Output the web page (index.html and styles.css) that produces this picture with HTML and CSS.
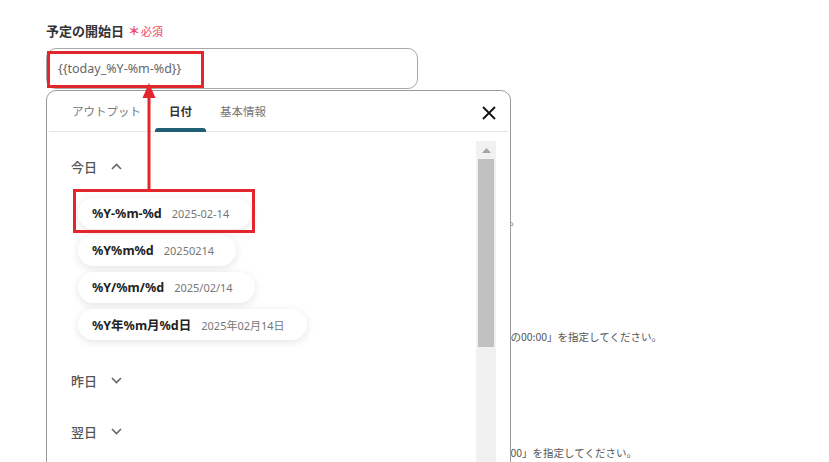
FILE: index.html
```html
<!DOCTYPE html>
<html lang="ja">
<head>
<meta charset="utf-8">
<title>予定の開始日</title>
<link rel="stylesheet" href="styles.css">
</head>
<body>
<div class="page">
  <div class="field">
    <div class="label">予定の開始日<span class="req"><span class="ast">＊</span>必須</span></div>
    <div class="input-wrap">
      <div class="input">{{today_%Y-%m-%d}}</div>
      <div class="panel">
        <div class="tabs">
          <div class="tab">アウトプット</div>
          <div class="tab active">日付</div>
          <div class="tab">基本情報</div>
          <div class="close">
            <svg width="14" height="14" viewBox="0 0 14 14"><path d="M1 1 L13 13 M13 1 L1 13" stroke="#111" stroke-width="1.8" fill="none"/></svg>
          </div>
        </div>
        <div class="panel-body">
          <div class="content">
            <div class="sec-head">今日
              <svg class="chev" width="11" height="7" viewBox="0 0 11 7"><path d="M1 6 L5.5 1.5 L10 6" stroke="#666" stroke-width="1.6" fill="none"/></svg>
            </div>
            <div class="pills">
              <div class="pill"><span class="fmt">%Y-%m-%d</span><span class="val">2025-02-14</span></div>
              <div class="pill"><span class="fmt">%Y%m%d</span><span class="val">20250214</span></div>
              <div class="pill"><span class="fmt">%Y/%m/%d</span><span class="val">2025/02/14</span></div>
              <div class="pill"><span class="fmt">%Y年%m月%d日</span><span class="val">2025年02月14日</span></div>
            </div>
            <div class="sec-head sec-gap">昨日
              <svg class="chev" width="11" height="7" viewBox="0 0 11 7"><path d="M1 1 L5.5 5.5 L10 1" stroke="#666" stroke-width="1.6" fill="none"/></svg>
            </div>
            <div class="sec-head sec-gap2">翌日
              <svg class="chev" width="11" height="7" viewBox="0 0 11 7"><path d="M1 1 L5.5 5.5 L10 1" stroke="#666" stroke-width="1.6" fill="none"/></svg>
            </div>
          </div>
          <div class="scrollbar">
            <div class="sb-up"><svg width="9" height="5" viewBox="0 0 9 5"><path d="M0 5 L4.5 0 L9 5 Z" fill="#a3a3a3"/></svg></div>
            <div class="sb-thumb"></div>
          </div>
        </div>
      </div>
    </div>
  </div>
  <div class="notes">
    <p class="note n1">す。</p>
    <p class="note n2">日の00:00」を指定してください。</p>
    <p class="note n3">:00」を指定してください。</p>
  </div>

  <div class="hl hl-input"></div>
  <div class="hl hl-pill"></div>
  <svg class="arrow" width="14" height="110" viewBox="0 0 14 110">
    <path d="M7 0 L0.5 15 L13.5 15 Z" fill="#e3262b"/>
    <rect x="5.5" y="14" width="3" height="94" fill="#e3262b"/>
  </svg>
</div>
</body>
</html>
```

FILE: styles.css
```css
html, body {
  margin: 0;
  padding: 0;
  width: 829px;
  height: 462px;
  overflow: hidden;
  background: #fff;
}

.page {
  position: relative;
  width: 829px;
  height: 462px;
  padding: 22px 0 0 46px;
  box-sizing: border-box;
  font-family: "Noto Sans", "Noto Sans CJK JP", sans-serif;
  color: #333;
}

.label {
  font-family: "Noto Sans CJK JP", sans-serif;
  font-size: 13px;
  font-weight: 700;
  line-height: 18px;
  color: #333;
  display: flex;
  align-items: center;
}

.req {
  font-size: 11px;
  font-weight: 400;
  color: #ee4266;
  margin-left: 4px;
  display: inline-flex;
  align-items: center;
}

.ast {
  font-size: 12px;
  font-weight: 700;
  margin-right: 1px;
}

.input-wrap {
  position: relative;
  margin-top: 8px;
  width: 372px;
}

.input {
  height: 41px;
  box-sizing: border-box;
  border: 1px solid #a9a9a9;
  border-radius: 10px;
  padding: 0 11px;
  display: flex;
  align-items: center;
  font-size: 12.5px;
  color: #666;
}

.panel {
  position: absolute;
  left: 0;
  top: 42px;
  width: 465px;
  height: 373px;
  box-sizing: border-box;
  border: 1px solid #9a9a9a;
  border-radius: 10px 10px 0 0;
  background: #fff;
  z-index: 2;
  display: flex;
  flex-direction: column;
  overflow: hidden;
}

.tabs {
  height: 41px;
  flex: none;
  margin: 0 2px;
  padding-left: 9px;
  box-sizing: border-box;
  border-bottom: 1px solid #e6e6e6;
  display: flex;
  align-items: stretch;
  font-family: "Noto Sans CJK JP", sans-serif;
  font-size: 11.5px;
  position: relative;
}

.tab {
  padding: 0 14px;
  display: flex;
  align-items: center;
  color: #777;
  position: relative;
}

.tab.active {
  color: #333;
  font-weight: 700;
}

.tab.active::after {
  content: "";
  position: absolute;
  left: 0;
  right: 0;
  bottom: -1px;
  height: 4px;
  background: #1e5f74;
  border-radius: 3px 3px 0 0;
}

.close {
  margin-left: auto;
  margin-right: 12px;
  display: flex;
  align-items: center;
  padding-top: 4px;
}

.panel-body {
  flex: 1;
  display: flex;
  min-height: 0;
}

.content {
  flex: 1;
  padding: 19px 0 0 24px;
}

.sec-head {
  height: 30px;
  display: flex;
  align-items: center;
  font-family: "Noto Sans CJK JP", sans-serif;
  font-size: 13px;
  font-weight: 500;
  color: #555;
}

.chev {
  margin-left: 14px;
}

.sec-gap {
  margin-top: 25px;
}

.sec-gap2 {
  margin-top: 21px;
}

.pills {
  margin-top: 17px;
  margin-left: 7px;
  display: flex;
  flex-direction: column;
  align-items: flex-start;
  gap: 6px;
}

.pill {
  height: 31px;
  box-sizing: border-box;
  border-radius: 16px;
  background: #fff;
  box-shadow: 0 2px 9px rgba(0, 0, 0, 0.11);
  padding: 0 22px 0 14px;
  display: flex;
  align-items: center;
  gap: 10px;
}

.fmt {
  font-size: 12.5px;
  font-weight: 700;
  color: #222;
}

.val {
  font-size: 11px;
  color: #777;
}

.scrollbar {
  width: 20px;
  margin: 9px 14px 0 0;
  background: #f1f1f1;
  display: flex;
  flex-direction: column;
  align-items: center;
}

.sb-up {
  height: 18px;
  display: flex;
  align-items: center;
  justify-content: center;
}

.sb-thumb {
  width: 16px;
  height: 188px;
  background: #c1c1c1;
}

.notes {
  margin-top: 124px;
  font-family: "Noto Sans CJK JP", sans-serif;
  font-size: 10.5px;
  color: #555;
}

.note {
  margin: 0;
  line-height: 16px;
  text-align: right;
  white-space: nowrap;
}

.n1 {
  width: 474px;
}

.n2 {
  width: 616px;
  margin-top: 100px;
}

.n3 {
  width: 591px;
  margin-top: 100px;
}

.hl {
  position: absolute;
  border: 3px solid #e3262b;
  box-sizing: border-box;
  z-index: 5;
}

.hl-input {
  left: 47px;
  top: 51px;
  width: 157px;
  height: 37px;
}

.hl-pill {
  left: 73px;
  top: 189px;
  width: 182px;
  height: 44px;
}

.arrow {
  position: absolute;
  left: 142px;
  top: 83px;
  z-index: 6;
}
```
